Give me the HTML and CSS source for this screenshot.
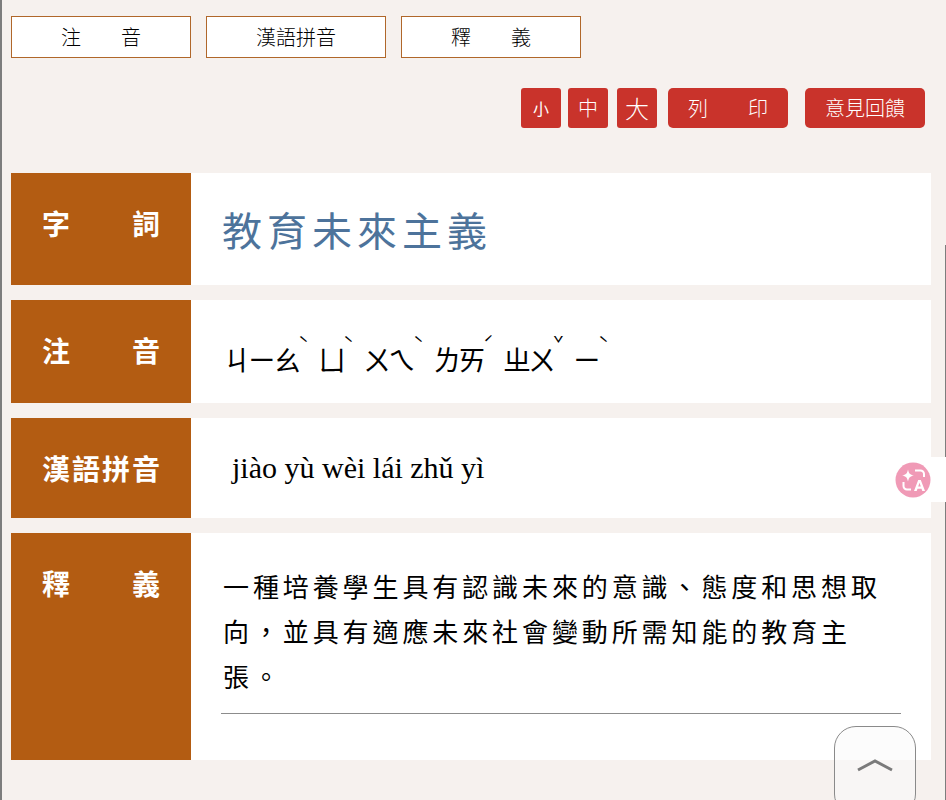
FILE: index.html
```html
<!DOCTYPE html>
<html lang="zh-Hant">
<head>
    <meta charset="UTF-8">
    <meta name="viewport" content="width=device-width, initial-scale=1.0">
    <title>教育未來主義</title>
    <link rel="stylesheet" href="styles.css">
</head>
<body>
    <div class="page">
        <nav class="tabs">
            <a class="tab">注　　音</a>
            <a class="tab">漢語拼音</a>
            <a class="tab">釋　　義</a>
        </nav>

        <div class="tools">
            <div class="sizes">
                <button class="tool size-s">小</button>
                <button class="tool size-m">中</button>
                <button class="tool size-l">大</button>
            </div>
            <button class="tool wide print">列　　印</button>
            <button class="tool wide">意見回饋</button>
        </div>

        <div class="entry">
            <div class="row row-word">
                <div class="row-label">字　　詞</div>
                <div class="row-body word">教育未來主義</div>
            </div>
            <div class="row row-zhuyin">
                <div class="row-label">注　　音</div>
                <div class="row-body zhuyin">
                    <span class="syllable">ㄐㄧㄠ<span class="tone">ˋ</span></span>
                    <span class="syllable">ㄩ<span class="tone">ˋ</span></span>
                    <span class="syllable">ㄨㄟ<span class="tone">ˋ</span></span>
                    <span class="syllable">ㄌㄞ<span class="tone">ˊ</span></span>
                    <span class="syllable">ㄓㄨ<span class="tone">ˇ</span></span>
                    <span class="syllable">ㄧ<span class="tone">ˋ</span></span>
                </div>
            </div>
            <div class="row row-pinyin">
                <div class="row-label">漢語拼音</div>
                <div class="row-body pinyin">jiào yù wèi lái zhǔ yì</div>
            </div>
            <div class="row row-meaning">
                <div class="row-label">釋　　義</div>
                <div class="row-body meaning">
                    <p>一種培養學生具有認識未來的意識、態度和思想取向，並具有適應未來社會變動所需知能的教育主張。</p>
                </div>
            </div>
        </div>
    </div>

    <div class="scroll-line"></div>

    <div class="translate-tab">
        <svg class="translate-icon" width="36" height="36" viewBox="0 0 36 36">
            <circle cx="18" cy="18" r="17.5" fill="#f09ab6"/>
            <path d="M13 7.500c.8 4 2 5.200 6 6-4 .8-5.200 2-6 6-.8-4-2-5.200-6-6 4-.8 5.200-2 6-6z" fill="#fff"/>
            <path d="M20 8.500h5.500a3.500 3.500 0 0 1 3.500 3.500v3M8.500 20v4a3.500 3.500 0 0 0 3.500 3.500h4" fill="none" stroke="#fff" stroke-width="2"/>
            <path d="M19 29l4.200-11h2.600l4.200 11h-2.700l-.8-2.300h-4l-.8 2.300zM23.200 24.600h2.600l-1.300-3.800z" fill="#fff" fill-rule="evenodd"/>
        </svg>
    </div>

    <button class="to-top" aria-label="top">
        <svg width="36" height="14" viewBox="0 0 36 14">
            <path d="M1 12L18 3l17 9" fill="none" stroke="#7a7a7a" stroke-width="3"/>
        </svg>
    </button>
</body>
</html>
```

FILE: styles.css
```css
html, body {
    height: 100%;
    overflow: hidden;
}
body {
    margin: 0;
    background-color: #f6f1ee;
    font-family: "Noto Sans CJK TC", "Noto Sans", sans-serif;
    color: #000;
}
.page {
    border-left: 2px solid #7d7d7d;
    padding: 16px 15px 40px 9px;
    height: 100%;
    box-sizing: border-box;
}
.tabs {
    display: flex;
    gap: 15px;
}
.tab {
    width: 180px;
    height: 42px;
    box-sizing: border-box;
    border: 1px solid #b0672a;
    background-color: #fff;
    display: flex;
    align-items: center;
    justify-content: center;
    font-size: 20px;
    font-weight: 300;
    line-height: 1;
}
.tools {
    display: flex;
    justify-content: flex-end;
    margin-top: 30px;
    padding-right: 6px;
    gap: 17px;
}
.sizes {
    display: flex;
    gap: 7px;
    margin-right: -6px;
}
.tool {
    width: 40px;
    height: 40px;
    padding: 0;
    border: none;
    border-radius: 3px;
    background-color: #c9332b;
    color: #fff;
    font-family: inherit;
    font-weight: 300;
    font-size: 20px;
    line-height: 1;
}
.size-s {
    font-size: 16px;
    font-weight: 400;
}
.size-l {
    font-size: 24px;
    margin-left: 2px;
}
.wide {
    width: 120px;
    border-radius: 5px;
}
.entry {
    margin-top: 45px;
    display: flex;
    flex-direction: column;
    gap: 15px;
}
.row {
    display: grid;
    grid-template-columns: 180px 1fr;
    background-color: #fff;
}
.row-word {
    height: 112px;
}
.row-zhuyin {
    height: 103px;
}
.row-pinyin {
    height: 100px;
}
.row-meaning {
    height: 227px;
}
.row-label {
    background-color: #b35c12;
    color: #fff;
    font-size: 28px;
    font-weight: 700;
    letter-spacing: 2px;
    line-height: 40px;
    text-align: center;
    padding: 30px 0 0 2px;
}
.row-body {
    padding-left: 31px;
}
.word {
    color: #4d739b;
    font-size: 40px;
    letter-spacing: 5px;
    line-height: 112px;
    font-weight: 400;
}
.zhuyin {
    display: flex;
    align-items: flex-start;
    gap: 20px;
    padding-top: 49px;
    padding-left: 32px;
    font-size: 28px;
    letter-spacing: -3px;
    line-height: 20px;
    font-weight: 400;
}
.syllable {
    position: relative;
    height: 20px;
}
.tone {
    position: absolute;
    left: 100%;
    top: -12px;
    font-size: 18px;
    line-height: 12px;
    letter-spacing: 0;
}
.pinyin {
    font-family: "Liberation Serif", serif;
    font-size: 30px;
    line-height: 100px;
    padding-left: 41px;
}
.meaning {
    padding-left: 30px;
    padding-right: 30px;
}
.meaning p {
    margin: 0;
    padding: 30px 0 15px 2px;
    border-bottom: 1px solid #8c8c8c;
    font-size: 26px;
    letter-spacing: 3.9px;
    line-height: 45px;
    font-weight: 400;
}
.scroll-line {
    position: fixed;
    right: 0;
    top: 245px;
    bottom: 0;
    width: 1px;
    background-color: #7d7d7d;
}
.translate-tab {
    position: fixed;
    right: 0;
    top: 457px;
    width: 56px;
    height: 45px;
    border-radius: 22px 0 0 22px;
    background-color: #fff;
    display: flex;
    align-items: center;
    padding-left: 5px;
    box-sizing: border-box;
}
.to-top {
    position: fixed;
    left: 834px;
    top: 726px;
    width: 82px;
    height: 90px;
    padding: 0 0 10px;
    border: 1px solid #8a8a8a;
    border-radius: 22px;
    background-color: rgba(250, 250, 250, 0.6);
}
```
